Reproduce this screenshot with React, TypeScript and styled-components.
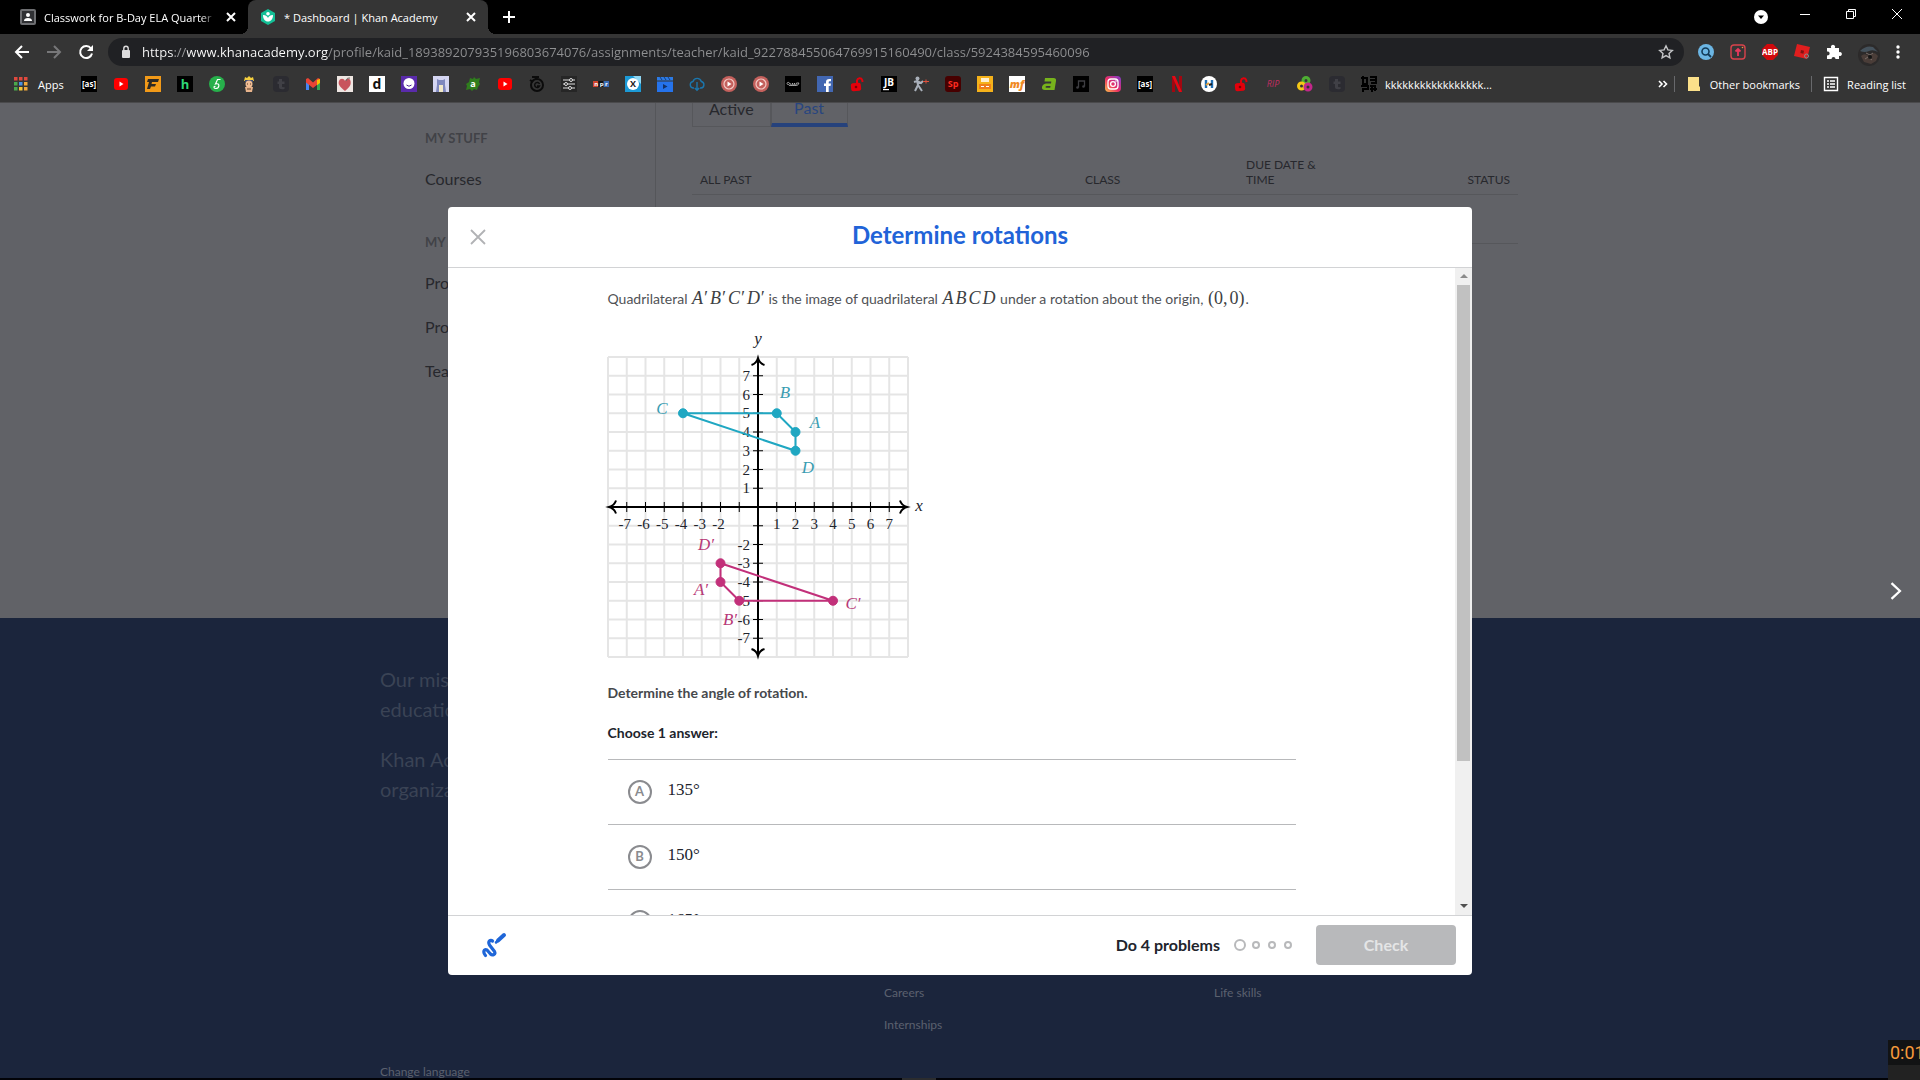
import React from "react";
import styled, { createGlobalStyle } from "styled-components";

const GlobalStyle = createGlobalStyle`
  *, *::before, *::after { box-sizing: border-box; }
  html, body, #root { height: 100%; }
  body { margin: 0; background: #000; font-family: Lato, "Noto Sans", sans-serif; overflow: hidden; }
  button, input { font: inherit; margin: 0; }
  button { border: 0; padding: 0; background: none; color: inherit; cursor: pointer; }
  a { color: inherit; text-decoration: none; }
  h1, h2, p, ul { margin: 0; padding: 0; }
  ul { list-style: none; }
  svg { display: block; }
`;

const uiFont = `"Open Sans", "Noto Sans", sans-serif`;
const mathFont = `"Liberation Serif", "Times New Roman", serif`;

/* ---------- window ---------- */

const Window = styled.div`
  display: grid;
  grid-template-rows: auto minmax(0, 1fr) 2px;
  height: 100vh;
`;

const Chrome = styled.header`
  background: #353535;
  color: #fff;
  font-family: ${uiFont};
  font-size: 11px;
  border-bottom: 1px solid #4a4a4c;
`;

const TabStrip = styled.div`
  display: flex;
  height: 34px;
  background: #000;
  padding-left: 8px;
`;

const BrowserTab = styled.div<{ $active?: boolean }>`
  position: relative;
  display: flex;
  align-items: center;
  gap: 8px;
  width: 240px;
  padding: 0 9px 0 12px;
  border-radius: 8px 8px 0 0;
  background: ${(p) => (p.$active ? "#353535" : "transparent")};
  &::before, &::after {
    content: ${(p) => (p.$active ? '""' : "none")};
    position: absolute;
    bottom: 0;
    width: 8px;
    height: 8px;
  }
  &::before { left: -8px; background: radial-gradient(circle at 0 0, transparent 8px, #353535 8px); }
  &::after { right: -8px; background: radial-gradient(circle at 100% 0, transparent 8px, #353535 8px); }
`;

const TabTitle = styled.span<{ $fade?: boolean }>`
  flex: 1;
  min-width: 0;
  overflow: hidden;
  white-space: nowrap;
  ${(p) => p.$fade && "mask-image: linear-gradient(to right, #000 92%, transparent);"}
`;

const IconButton = styled.button<{ $size?: number }>`
  display: grid;
  place-items: center;
  flex: none;
  width: ${(p) => p.$size ?? 16}px;
  height: ${(p) => p.$size ?? 16}px;
`;

const NewTab = styled(IconButton)`
  margin: 9px 0 0 13px;
`;

const TabSearch = styled(IconButton)`
  margin: 9px 28px 0 auto;
`;

const WindowButtons = styled.div`
  display: flex;
  align-items: center;
  gap: 30px;
  padding: 0 15px 6px 0;
`;

const Toolbar = styled.div`
  display: flex;
  align-items: center;
  height: 36px;
  padding: 0 14px;
`;

const NavButtons = styled.div`
  display: flex;
  gap: 16px;
  margin-right: 14px;
`;

const Omnibox = styled.label`
  display: flex;
  align-items: center;
  flex: 1;
  gap: 8px;
  height: 28px;
  padding: 0 10px;
  border-radius: 14px;
  background: #202124;
`;

const UrlInput = styled.input`
  flex: 1;
  min-width: 0;
  border: 0;
  padding: 0;
  outline: 0;
  height: 24px;
  font-size: 13px;
  color: transparent;
  background: linear-gradient(to right, #fff 31px, #9a9b9d 31px 45px, #fff 45px 186px, #8f9092 186px);
  background-clip: text;
  -webkit-background-clip: text;
`;

const Extensions = styled.div`
  display: flex;
  align-items: center;
  gap: 16px;
  margin-left: 14px;
`;

const BookmarkBar = styled.nav`
  display: flex;
  align-items: center;
  gap: 16px;
  height: 32px;
  padding: 0 14px 4px 13px;
`;

const Bookmark = styled.a`
  display: flex;
  align-items: center;
  gap: 8px;
  white-space: nowrap;
`;

const AppsLink = styled(Bookmark)`
  width: 52px;
  gap: 9px;
`;

const BarEnd = styled.div`
  display: flex;
  align-items: center;
  gap: 11px;
  margin-left: auto;
`;

const MoreButton = styled(IconButton)`
  width: 8px;
`;

const Divider = styled.span`
  width: 1px;
  height: 16px;
  background: #68696c;
`;

/* ---------- page behind the dialog ---------- */

const Viewport = styled.div`
  position: relative;
  overflow: hidden;
  background: #1b253c;
`;

const Dashboard = styled.main`
  background: #616267;
  color: #27282d;
`;

const Container = styled.div`
  display: flex;
  max-width: 1200px;
  margin: 0 auto;
`;

const ScrolledPage = styled(Container)`
  margin-top: -12px;
`;

const Sidebar = styled.nav`
  display: flex;
  flex-direction: column;
  gap: 20px;
  width: 296px;
  padding: 26px 0 225px 65px;
  border-right: 1px solid #55565a;
`;

const SideHeading = styled.h2`
  padding-top: 2px;
  font-size: 13px;
  line-height: 38px;
  font-weight: 700;
  color: #414247;
`;

const SideLink = styled.a`
  display: block;
  font-size: 16px;
  line-height: 44px;
`;

const Assignments = styled.section`
  flex: 1;
  padding: 0 42px 0 36px;
`;

const PageTabs = styled.div`
  display: flex;
`;

const PageTab = styled.button<{ $active?: boolean }>`
  height: 36px;
  min-width: 77px;
  padding: 0 16px;
  font-size: 16px;
  color: ${(p) => (p.$active ? "#29467f" : "#27282d")};
  border: 1px solid #56575b;
  border-top: 0;
  border-bottom: ${(p) => (p.$active ? "4px solid #26427c" : "1px solid #56575b")};
`;

const Table = styled.table`
  width: 100%;
  margin-top: 24px;
  border-collapse: collapse;
  table-layout: fixed;
  font-size: 12px;
  line-height: 15px;
  th {
    padding: 6px 8px 7px;
    font-weight: 400;
    text-align: left;
    vertical-align: bottom;
  }
  th:last-child { text-align: right; }
  tr { border-bottom: 1px solid #56575b; }
  td { height: 49px; }
`;

const NextArrow = styled.button`
  position: absolute;
  top: 479px;
  right: 15px;
`;

const Footer = styled.footer`
  color: #5b616f;
  font-size: 12px;
`;

const FooterColumns = styled(Container)`
  padding: 39px 20px 0;
`;

const Mission = styled.div`
  flex: none;
  width: 504px;
  padding-top: 7px;
  font-size: 20px;
  line-height: 30px;
  color: #3a4355;
  p + p { margin-top: 20px; }
`;

const LinkColumn = styled.ul`
  flex: none;
  width: 330px;
  line-height: 32px;
`;

const Language = styled.div`
  max-width: 1160px;
  margin: 15px auto 0;
  line-height: 32px;
`;

/* ---------- exercise dialog ---------- */

const Overlay = styled.div`
  position: absolute;
  inset: 0;
  display: grid;
  place-items: center;
`;

const Dialog = styled.section`
  display: grid;
  grid-template-rows: 60px minmax(0, 1fr) 59px;
  width: min(1024px, 100%);
  height: min(768px, 100%);
  overflow: hidden;
  border-radius: 4px;
  background: #fff;
  color: #21242c;
`;

const DialogHeader = styled.header`
  display: grid;
  grid-template-columns: 28px 1fr 28px;
  align-items: center;
  padding: 0 16px;
`;

const Title = styled.h1`
  padding-bottom: 4px;
  font-size: 24px;
  line-height: 28px;
  font-weight: 700;
  text-align: center;
  color: #2163d8;
`;

const DialogBody = styled.div`
  display: grid;
  grid-template-columns: 1fr 17px;
  overflow: hidden;
  border: solid #d2d3d5;
  border-width: 1px 0;
`;

const Exercise = styled.div`
  min-height: 0;
  width: 100%;
  max-width: 688px;
  margin: 0 auto;
  padding-top: 20px;
  font-size: 14px;
  line-height: 22px;
`;

const Question = styled.p`
  color: #505256;
  white-space: nowrap;
`;

const Formula = styled.span<{ $upright?: boolean; $primed?: boolean }>`
  display: inline-flex;
  gap: ${(p) => (p.$primed ? 3 : 2)}px;
  padding: 0 1px;
  font-family: ${mathFont};
  font-size: 18px;
  line-height: 20px;
  font-style: ${(p) => (p.$upright ? "normal" : "italic")};
  color: #3d3f43;
`;

const Graph = styled.svg`
  margin-top: 25px;
  overflow: visible;
  font-family: ${mathFont};
`;

const Prompt = styled.p`
  margin-top: 21px;
  font-weight: 700;
  color: #46484c;
`;

const Choices = styled.fieldset`
  margin: 0;
  padding: 0;
  border: 0;
  min-width: 0;
`;

const Legend = styled.legend`
  padding: 18px 0 15px;
  font-weight: 700;
`;

const Choice = styled.label`
  display: flex;
  align-items: center;
  gap: 16px;
  height: 65px;
  padding-left: 20px;
  border-top: 1px solid #b8b9bb;
`;

const Bubble = styled.span`
  display: grid;
  place-items: center;
  width: 24px;
  height: 24px;
  font-size: 13px;
  font-weight: 700;
  line-height: 20px;
  color: #8a8b8f;
  > * { grid-area: 1 / 1; }
  input {
    appearance: none;
    width: 24px;
    height: 24px;
    border: 2px solid #8a8b8f;
    border-radius: 50%;
  }
  span { padding-bottom: 2px; }
`;

const Answer = styled.span`
  font-family: ${mathFont};
  font-size: 17px;
  line-height: 20px;
  padding-bottom: 4px;
`;

const Scrollbar = styled.div`
  display: grid;
  grid-template-rows: 17px 476fr 137fr 17px;
  place-items: center;
  background: #f0f0f0;
`;

const Thumb = styled.span`
  grid-row: 2;
  width: 13px;
  height: 100%;
  background: #c1c1c1;
`;

const ArrowDown = styled.svg`
  grid-row: 4;
`;

const DialogFooter = styled.footer`
  display: flex;
  align-items: center;
  padding: 0 16px 0 33px;
`;

const Progress = styled.div`
  display: flex;
  align-items: center;
  gap: 12px;
  margin-left: auto;
  margin-right: 20px;
  font-size: 16px;
  font-weight: 700;
`;

const ProgressLabel = styled.span`
  padding-bottom: 2px;
`;

const Dots = styled.span`
  display: grid;
  grid-auto-flow: column;
  grid-auto-columns: 16px;
  place-items: center;
`;

const Dot = styled.span<{ $current?: boolean }>`
  width: ${(p) => (p.$current ? 12 : 8)}px;
  height: ${(p) => (p.$current ? 12 : 8)}px;
  border: 2px solid #b8b9bb;
  border-radius: 50%;
`;

const CheckButton = styled.button`
  width: 140px;
  height: 40px;
  padding-bottom: 2px;
  border-radius: 4px;
  background: #b8b9bb;
  color: #e4e5e6;
  font-size: 16px;
  font-weight: 700;
`;

/* ---------- recorder and taskbar edge ---------- */

const Recorder = styled.div`
  position: fixed;
  right: 0;
  bottom: 0;
  width: 32px;
  height: 40px;
  overflow: hidden;
  background: #222;
  font-family: Roboto, sans-serif;
  font-size: 18px;
  line-height: 25px;
  color: #f79a3c;
  white-space: nowrap;
`;

const RecorderTime = styled.div`
  padding-left: 2px;
  background: #121314;
`;

const Taskbar = styled.div`
  display: flex;
  justify-content: center;
  background: #020308;
  padding-right: 82px;
`;

const TaskHandle = styled.span`
  width: 34px;
  background: #2b2c2e;
`;

/* ---------- icons ---------- */

const Stroke = ({ d, size = 16, color = "#fff", width = 2 }: { d: string; size?: number; color?: string; width?: number }) => (
  <svg width={size} height={size} viewBox="0 0 16 16" fill="none" stroke={color} strokeWidth={width} aria-hidden="true">
    <path d={d} />
  </svg>
);

const Tile = ({ bg, r = 0, children }: { bg?: string; r?: number; children?: React.ReactNode }) => (
  <svg width="16" height="16" viewBox="0 0 16 16" aria-hidden="true">
    {bg && <rect width="16" height="16" rx={r} fill={bg} />}
    {children}
  </svg>
);

const Letter = ({ children, fill = "#fff", size = 11, y = 12, italic = false, weight = 700 }: any) => (
  <text x="8" y={y} textAnchor="middle" fontSize={size} fontWeight={weight} fill={fill} fontFamily="Open Sans" fontStyle={italic ? "italic" : "normal"}>
    {children}
  </text>
);

const YouTube = () => (
  <Tile>
    <rect x="1" y="2" width="14" height="12" rx="3" fill="#f00" />
    <path d="M6.5 5.5v5l4-2.5z" fill="#fff" />
  </Tile>
);

const Tumblr = () => (
  <Tile bg="#2b2b31" r={4}>
    <path d="M6 3h3v2.500h2.500V8H9v2.500q0 1 2.500.5V13q-5.500 1-5.500-2V8H4.500V5.500H6z" fill="#404046" />
  </Tile>
);

const PlayDisc = () => (
  <Tile>
    <circle cx="8" cy="8" r="8" fill="#c4605c" />
    <circle cx="8" cy="8" r="5" fill="none" stroke="#f3c9c4" strokeWidth="1.2" />
    <path d="M6.5 5.500v5l4-2.500z" fill="#fff" />
  </Tile>
);

const RedLock = () => (
  <Tile>
    <rect x="2" y="7" width="10" height="8" rx="2" fill="#e3000b" transform="rotate(-6 7 11)" />
    <path d="M8 7V4.500a2.700 2.700 0 0 1 5.200-.5l.4 2" fill="none" stroke="#e3000b" strokeWidth="2" />
    <circle cx="7" cy="11" r="1.3" fill="#7d0006" />
  </Tile>
);

const AsTile = () => (
  <Tile bg="#000">
    <Letter size={8} y={10.5}>[as]</Letter>
  </Tile>
);

const appColors = ["#e0493e", "#e0493e", "#e0493e", "#4aa84c", "#4a90e2", "#f2a83b", "#4aa84c", "#f2c53b", "#f2a83b"];

const AppsGrid = () => (
  <Tile>
    {appColors.map((c, i) => (
      <rect key={i} x={1 + (i % 3) * 5} y={1 + Math.floor(i / 3) * 5} width="3.5" height="3.5" fill={c} />
    ))}
  </Tile>
);

const bookmarks: { name: string; icon: React.ReactNode }[] = [
  { name: "Adult Swim", icon: <AsTile /> },
  { name: "YouTube", icon: <YouTube /> },
  { name: "Flip", icon: <Tile bg="#f29a18"><path d="M3 3h11l-1 3H7L6.500 8H11l-1 2.500H6L5 13H2l2-7H2z" fill="#2e2a24" /></Tile> },
  { name: "Hulu", icon: <Tile bg="#000"><Letter fill="#2fd877" size={13} y={12.5}>h</Letter></Tile> },
  { name: "Five", icon: <Tile><circle cx="8" cy="8" r="8" fill="#27b04b" /><path d="M11.500 3.500H8.500L6.500 8c5-1.500 4 4.500 0 4.500-2 0-2-2.500 0-2" fill="none" stroke="#fff" strokeWidth="1.2" /></Tile> },
  { name: "Naruto", icon: <Tile><path d="M3 5l1-4 2 1 2-2 2 2 2-1 1 4z" fill="#f4cf3e" /><rect x="4" y="4" width="8" height="2" fill="#3f4d72" /><circle cx="8" cy="8" r="3.5" fill="#f0bd94" /><path d="M4 11h8l-1 5H5z" fill="#e8b48c" /><path d="M6 8h1M9 8h1M6 13h4" stroke="#5b3b22" /></Tile> },
  { name: "Tumblr", icon: <Tumblr /> },
  { name: "Gmail", icon: <Tile><path d="M1 3.500V14h3V7z" fill="#4285f4" /><path d="M15 3.500V14h-3V7z" fill="#34a853" /><path d="M1 3l2-1 5 4.500L13 2l2 1v3.500L8 12 1 6.500z" fill="#ea4335" /><path d="M12 4l3-1v4l-3 2.200z" fill="#fbbc04" /></Tile> },
  { name: "Heart", icon: <Tile bg="#eee6e2"><path d="M8 15C2 10 1 8 2 5s5-3 6 0c1-3 5-3 5.500 0S14 10 8 15z" fill="#c8545c" /><path d="M9 5q1-4 4-3" stroke="#6f6a66" fill="none" /></Tile> },
  { name: "Dictionary", icon: <Tile bg="#fff"><Letter fill="#111" size={14} y={13}>d</Letter></Tile> },
  { name: "Ghost", icon: <Tile bg="#5a2bab"><circle cx="8" cy="7.5" r="5.5" fill="#fff" /><path d="M5.500 9q2.500 2.500 5 0" stroke="#4a2490" fill="none" /></Tile> },
  { name: "Bear", icon: <Tile bg="#d5d6f2"><path d="M4 3l2 1h4l2-1v6l1 7H3l1-7z" fill="#7f88bd" /><rect x="6" y="9" width="4" height="7" fill="#f1e8c8" /></Tile> },
  { name: "Turtle", icon: <Tile><path d="M9 1l2 2 4-1-1 4 1 2-2 3-1 3-3-1-2 2-2-2-4 1 1-4-1-2 3-2 1-4 3 1z" fill="#2f7d1d" /><Letter size={9} y={11}>a</Letter></Tile> },
  { name: "YouTube channel", icon: <YouTube /> },
  { name: "Stopwatch", icon: <Tile><circle cx="8" cy="9" r="6" fill="none" stroke="#0b0b0b" strokeWidth="2" /><path d="M3 1h7M7 1v3M1 4l3 2" stroke="#0b0b0b" strokeWidth="2" /><path d="M10.500 8a2.500 2.500 0 1 0 0 2H8" fill="none" stroke="#0b0b0b" strokeWidth="1.5" /></Tile> },
  { name: "Mixer", icon: <Tile bg="#262626"><path d="M2 4h12M2 8h12M2 12h12" stroke="#ddd" strokeWidth="1.2" /><g fill="#262626" stroke="#ddd"><circle cx="10" cy="4" r="1.5" /><circle cx="5" cy="8" r="1.5" /><circle cx="9" cy="12" r="1.5" /></g></Tile> },
  { name: "NPR", icon: <Tile><rect y="5" width="5.3" height="6" fill="#d1442c" /><rect x="5.3" y="5" width="5.300" height="6" fill="#111" /><rect x="10.6" y="5" width="5.4" height="6" fill="#3a6cb4" /><Letter size={6} y={9.8}>n p r</Letter></Tile> },
  { name: "Xbox", icon: <Tile bg="#1c9ad6"><path d="M16 0v8L8 0z" fill="#8fd8f5" /><circle cx="8" cy="8" r="6" fill="#fff" /><Letter fill="#222" size={9} y={11}>X</Letter></Tile> },
  { name: "Movies", icon: <Tile><rect y="1" width="16" height="3.500" fill="#2c7be5" /><rect y="5.5" width="16" height="10.5" fill="#2573ec" /><path d="M3 1l2 3M7 1l2 3M11 1l2 3" stroke="#173d7c" /><path d="M6 8v5l4.500-2.500z" fill="#12326a" /></Tile> },
  { name: "Cloud", icon: <Tile><path d="M5 12H4a3.300 3.300 0 0 1 0-6.500 4.300 4.300 0 0 1 8.300 0A3.300 3.300 0 0 1 12 12h-1M8 6v8M5.800 12L8 14.300 10.200 12" fill="none" stroke="#1b76ad" strokeWidth="1.4" /></Tile> },
  { name: "Player", icon: <PlayDisc /> },
  { name: "Player 2", icon: <PlayDisc /> },
  { name: "Script", icon: <Tile bg="#000"><path d="M2 7.500c0-1.500 2.500-1.500 2.500 0s-2.500 1.500-2.500 0M5 7c1 3 2 3 2.500 0 .5 3 1.500 3 2 0 .5 3 1.500 3 2 0h2.500q-1 3-3 2.500H4" stroke="#b9b9b9" strokeWidth=".8" fill="none" /></Tile> },
  { name: "Facebook", icon: <Tile bg="#4267b2"><path d="M9 16V10H7V7.500h2V6c0-2.500 1.500-3.500 5-3v2.300c-2-.2-2.300.2-2.300 1.200v1H14L13.500 10h-1.800v6z" fill="#fff" /></Tile> },
  { name: "Lock", icon: <RedLock /> },
  { name: "JetBrains", icon: <Tile bg="#000"><Letter size={10} y={9.5}>JB</Letter><rect x="2" y="13" width="6" height="1.2" fill="#fff" /></Tile> },
  { name: "Robot", icon: <Tile><circle cx="4.5" cy="2.5" r="2" fill="#a9b0ba" /><path d="M4 4l1 5M1 6l3-1 4 2 2-2M5 9l4 6M5 9l-3 6" stroke="#a9b0ba" strokeWidth="2" fill="none" /><path d="M10 5.500h6M13 3.500v4" stroke="#e0503c" /></Tile> },
  { name: "Spark", icon: <Tile bg="#470000" r={3}><Letter fill="#ff2b20" size={9} y={11}>Sp</Letter></Tile> },
  { name: "Tickets", icon: <Tile bg="#f5b21a"><rect x="4" y="2" width="8" height="4" fill="#fff0cf" /><rect x="2" y="8" width="12" height="5" fill="#ef7e1a" /><path d="M4 10.500h3M9 10.500h3" stroke="#fff" /></Tile> },
  { name: "MF", icon: <Tile bg="#fff"><Letter fill="#f08a24" size={11} italic weight={800}>mf</Letter></Tile> },
  { name: "Green A", icon: <Tile><path d="M4 2h8.500q3 0 2.500 3l-1.500 9H4q-3.500 0-3-3t4-3.500h5l.3-2H3.500zM6 10q-1.500 0-1.500 1t1.200.8h3.500l.3-1.800z" fill="#77b31c" fillRule="evenodd" /></Tile> },
  { name: "Music", icon: <Tile bg="#000"><path d="M5.500 11.500V5h6v5.500" fill="none" stroke="#3e3e42" strokeWidth="1.3" /><circle cx="4.5" cy="11.5" r="1.3" fill="#3e3e42" /><circle cx="10.5" cy="10.5" r="1.3" fill="#3e3e42" /></Tile> },
  { name: "Instagram", icon: <Tile><defs><linearGradient id="ig" x1="0" y1="1" x2="1" y2="0"><stop offset="0" stopColor="#fdc14b" /><stop offset=".45" stopColor="#ec2f62" /><stop offset="1" stopColor="#7b3bd0" /></linearGradient></defs><rect width="16" height="16" rx="4" fill="url(#ig)" /><rect x="3" y="3" width="10" height="10" rx="3" fill="none" stroke="#fff" strokeWidth="1.3" /><circle cx="8" cy="8" r="2.4" fill="none" stroke="#fff" strokeWidth="1.3" /><circle cx="11" cy="5" r=".8" fill="#fff" /></Tile> },
  { name: "Adult Swim 2", icon: <AsTile /> },
  { name: "Netflix", icon: <Tile><path d="M3 0h3v16H3zM10 0h3v16h-3z" fill="#a30710" /><path d="M3 0h3l7 16h-3z" fill="#e50914" /></Tile> },
  { name: "H", icon: <Tile><circle cx="8" cy="8" r="8" fill="#fff" /><path d="M5 4v8M11 4v8" stroke="#1f6fb5" strokeWidth="2.4" /><path d="M5 9l3-2" stroke="#e8a33a" strokeWidth="2" /><path d="M8 9l3-1" stroke="#1d1d1f" strokeWidth="2" /></Tile> },
  { name: "Lock 2", icon: <RedLock /> },
  { name: "RIP", icon: <Tile><Letter fill="#c02d62" size={9} y={11} italic weight={400}>RIP</Letter></Tile> },
  { name: "Rings", icon: <Tile><g fill="none" strokeWidth="3"><circle cx="9" cy="4.5" r="3" stroke="#4eae33" /><circle cx="4.5" cy="10" r="3" stroke="#f5c817" /><circle cx="11" cy="11" r="3" stroke="#c2288a" /></g></Tile> },
  { name: "Tumblr 2", icon: <Tumblr /> },
];

const Pattern = () => (
  <Tile>
    <path d="M0 2h7M2 0v7M6 3v5H1M9 1h6v6M9 4h5M10 7h6M0 10h7v3H2v3M9 10h5v5M11 9v7M9 13h7" fill="none" stroke="#000" strokeWidth="2" />
  </Tile>
);

/* ---------- graph ---------- */

const UNIT = 18.75;
const px = (x: number) => 150 + x * UNIT;
const py = (y: number) => 172 - y * UNIT;
const range = (a: number, b: number) => Array.from({ length: b - a + 1 }, (_, i) => a + i);

const Shape = ({ points, color }: { points: number[][]; color: string }) => (
  <g fill={color} stroke={color}>
    <polygon points={points.map(([x, y]) => `${px(x)},${py(y)}`).join(" ")} fill="none" strokeWidth="2" />
    {points.map(([x, y]) => (
      <circle key={`${x},${y}`} cx={px(x)} cy={py(y)} r="4.5" strokeWidth="1" />
    ))}
  </g>
);

const Label = ({ x, y, color = "#21242c", children }: any) => (
  <text x={x} y={y} fill={color} fontSize="17" fontStyle="italic" textAnchor="middle">
    {children}
  </text>
);

const CoordinateGraph = () => (
  <Graph width="320" height="326" viewBox="0 0 320 326" role="img" aria-label="Quadrilateral ABCD and its image on a coordinate plane">
    <g stroke="#e5e5e5" strokeWidth="2">
      {range(-8, 8).map((n) => (
        <React.Fragment key={n}>
          <path d={`M${px(n)} ${py(8)}V${py(-8)}`} />
          <path d={`M${px(-8)} ${py(n)}H${px(8)}`} />
        </React.Fragment>
      ))}
    </g>
    <g stroke="#000" strokeWidth="2" fill="none">
      <path d="M2 172H298M150 24V320" />
      <path d="M8 165.500q-1.500 5-7 6.500q5.500 1.500 7 6.500M292 165.500q1.500 5 7 6.500q-5.500 1.500-7 6.500M143.500 30q5-1.500 6.500-7q1.500 5.500 6.500 7M143.500 314q5 1.500 6.500 7q1.500-5.500 6.500-7" />
      <g strokeWidth="1">
        {range(-7, 7).filter((n) => n !== 0).map((n) => (
          <path key={n} d={`M${px(n)} 167V177M145 ${py(n)}H155`} />
        ))}
      </g>
    </g>
    <g fill="#21242c" fontSize="15">
      {range(-7, 7).filter((n) => n !== 0 && n !== -1).map((n) => (
        <React.Fragment key={n}>
          <text x={n < 0 ? px(n) - 2 : px(n)} y="194" textAnchor="middle">{n}</text>
          <text x="142" y={py(n) + 5} textAnchor="end">{n}</text>
        </React.Fragment>
      ))}
    </g>
    <Shape color="#1fa7c2" points={[[2, 4], [1, 5], [-4, 5], [2, 3]]} />
    <Shape color="#c2307a" points={[[-2, -4], [-1, -5], [4, -5], [-2, -3]]} />
    <Label x={150} y={9}>y</Label>
    <Label x={311} y={176}>x</Label>
    <Label x={207} y={93} color="#3a9db2">A</Label>
    <Label x={177} y={63} color="#3a9db2">B</Label>
    <Label x={54} y={79} color="#3a9db2">C</Label>
    <Label x={200} y={138} color="#3a9db2">D</Label>
    <Label x={93} y={260} color="#b83a78">A′</Label>
    <Label x={122} y={290} color="#b83a78">B′</Label>
    <Label x={245} y={274} color="#b83a78">C′</Label>
    <Label x={98} y={215} color="#b83a78">D′</Label>
  </Graph>
);

/* ---------- page content ---------- */

const sideGroups = [
  { title: "MY STUFF", links: ["Courses"] },
  { title: "MY ACCOUNT", links: ["Progress", "Profile", "Teachers"] },
];

const aboutLinks = ["About", "News", "Impact", "Our team", "Our interns", "Our content specialists", "Our leadership", "Our supporters", "Our contributors", "Our finances", "Careers", "Internships"];
const courseLinks = ["Courses", "Math: Pre-K - 8th grade", "Math: Get ready courses", "Math: high school & college", "Test prep", "Science", "Computing", "Arts & humanities", "Economics", "Reading & language arts", "Life skills"];

const url = "https://www.khanacademy.org/profile/kaid_189389207935196803674076/assignments/teacher/kaid_922788455064769915160490/class/5924384595460096";

export default function App() {
  return (
    <Window>
      <GlobalStyle />
      <Chrome>
        <TabStrip>
          <BrowserTab>
            <Tile bg="#6d6e71" r={2}>
              <rect x="2" y="2" width="12" height="12" fill="#303134" />
              <circle cx="8" cy="6" r="2" fill="#fff" />
              <path d="M4 12q0-3 4-3t4 3z" fill="#fff" />
            </Tile>
            <TabTitle $fade>Classwork for B-Day ELA Quarter</TabTitle>
            <IconButton aria-label="Close tab"><Stroke d="M4 4l8 8M12 4l-8 8" /></IconButton>
          </BrowserTab>
          <BrowserTab $active>
            <Tile>
              <path d="M8 0l7 4v8l-7 4-7-4V4z" fill="#14bf96" />
              <circle cx="8" cy="4.8" r="1.8" fill="#fff" />
              <path d="M3 6c3 0 4.500 1.500 5 3 .5-1.500 2-3 5-3 0 4-2 6.500-5 6.500S3 10 3 6z" fill="#fff" />
            </Tile>
            <TabTitle>* Dashboard | Khan Academy</TabTitle>
            <IconButton aria-label="Close tab"><Stroke d="M4 4l8 8M12 4l-8 8" /></IconButton>
          </BrowserTab>
          <NewTab aria-label="New tab"><Stroke d="M8 2v12M2 8h12" /></NewTab>
          <TabSearch aria-label="Search tabs">
            <svg width="14" height="14" viewBox="0 0 14 14"><circle cx="7" cy="7" r="7" fill="#fff" /><path d="M4 5.500h6L7 9z" fill="#000" /></svg>
          </TabSearch>
          <WindowButtons>
            <IconButton aria-label="Minimize"><Stroke d="M3 8.500h10" width={1} /></IconButton>
            <IconButton aria-label="Restore"><Stroke d="M3.500 5.500h7v7h-7zM5.500 5V3.500h7v7H11" width={1} /></IconButton>
            <IconButton aria-label="Close"><Stroke d="M3 3l10 10M13 3L3 13" width={1} /></IconButton>
          </WindowButtons>
        </TabStrip>
        <Toolbar>
          <NavButtons>
            <IconButton aria-label="Back"><Stroke d="M15 8H2M8 2L2 8l6 6" /></IconButton>
            <IconButton aria-label="Forward"><Stroke d="M1 8h13M8 2l6 6-6 6" color="#777779" /></IconButton>
            <IconButton aria-label="Reload">
              <svg width="16" height="16" viewBox="0 0 16 16"><path d="M13 4.500A6 6 0 1 0 14 9.500" fill="none" stroke="#fff" strokeWidth="2" /><path d="M15 1v6H9z" fill="#fff" /></svg>
            </IconButton>
          </NavButtons>
          <Omnibox>
            <Tile><rect x="4" y="6" width="8" height="8" rx="1" fill="#dcdcdd" /><path d="M5.800 6.500V4.500a2.200 2.200 0 0 1 4.400 0v2" fill="none" stroke="#dcdcdd" strokeWidth="1.4" /></Tile>
            <UrlInput type="text" aria-label="Address" defaultValue={url} />
            <Tile><path d="M8 1.800l1.900 4.100 4.400.5-3.300 3 .9 4.400L8 11.600l-3.900 2.200.9-4.400-3.300-3 4.400-.5z" fill="none" stroke="#c4c5c7" strokeWidth="1.4" /></Tile>
          </Omnibox>
          <Extensions>
            <IconButton aria-label="Image search"><Tile><circle cx="8" cy="8" r="8" fill="#6cb6e4" /><circle cx="7.5" cy="7.5" r="3.5" fill="none" stroke="#133a57" strokeWidth="1.6" /><path d="M10 10l3 3" stroke="#133a57" strokeWidth="1.8" /></Tile></IconButton>
            <IconButton aria-label="Uploader"><Tile><rect x="1" y="1" width="14" height="14" rx="3" fill="none" stroke="#d8434c" strokeWidth="1.4" /><path d="M8 12V5M5.500 7.500L8 5l2.500 2.500" fill="none" stroke="#e8385c" strokeWidth="1.8" /><circle cx="12.5" cy="3.5" r=".8" fill="#f0913c" /></Tile></IconButton>
            <IconButton aria-label="Adblock Plus"><Tile><path d="M5 0h6l5 5v6l-5 5H5l-5-5V5z" fill="#d0090c" /><Letter size={8} y={11}>ABP</Letter></Tile></IconButton>
            <IconButton aria-label="Roblox extension"><Tile><path d="M3 0l13 3-3 12L0 12z" fill="#e01e1e" /><path d="M7 6l3 .7-.6 3-3-.7z" fill="#7e1212" /><circle cx="12.5" cy="12" r="2" fill="none" stroke="#8c8c8c" /></Tile></IconButton>
            <IconButton aria-label="Extensions"><Tile><path d="M1 4h4.200a2.100 2.100 0 1 1 3.600 0H13v4.200a2 2 0 1 1 0 3.600V15H9.500a2 2 0 1 0-4 0H1v-3.700a2 2 0 1 0 0-3.800z" fill="#fff" /></Tile></IconButton>
            <IconButton aria-label="Profile">
              <svg width="22" height="22" viewBox="0 0 22 22"><circle cx="11" cy="11" r="11" fill="#2c2a2a" /><path d="M2 7Q8 1 15 3l5 5q-5-3-9-1t-9 0z" fill="#45525c" /><path d="M3 12q3-3 6-1t5-1 6 2l-2 5-5 3-7-2z" fill="#4a3d38" /><path d="M8 9l4 2 3-2M7 15l3-2 4 3" stroke="#7b6f69" fill="none" /><circle cx="12" cy="13" r="2" fill="#161616" /></svg>
            </IconButton>
            <IconButton aria-label="Menu"><Tile><g fill="#fff"><circle cx="8" cy="3" r="1.7" /><circle cx="8" cy="8" r="1.7" /><circle cx="8" cy="13" r="1.7" /></g></Tile></IconButton>
          </Extensions>
        </Toolbar>
        <BookmarkBar aria-label="Bookmarks">
          <AppsLink href="#"><AppsGrid />Apps</AppsLink>
          {bookmarks.map((b) => (
            <Bookmark key={b.name} href="#" aria-label={b.name}>{b.icon}</Bookmark>
          ))}
          <Bookmark href="#"><Pattern />kkkkkkkkkkkkkkkkk...</Bookmark>
          <BarEnd>
            <MoreButton aria-label="More bookmarks"><Stroke d="M4 5l3 3-3 3M8.500 5l3 3-3 3" width={1.6} /></MoreButton>
            <Divider />
            <Bookmark href="#"><Tile><path d="M2 1h11v9l1 1v4H2z" fill="#fbe08a" /></Tile>Other bookmarks</Bookmark>
            <Divider />
            <Bookmark href="#"><Tile><path d="M1.500 1.500h13v13h-13zM4 5h2M7 5h5M4 8h2M7 8h5M4 11h2M7 11h5" fill="none" stroke="#fff" strokeWidth="1.4" /></Tile>Reading list</Bookmark>
          </BarEnd>
        </BookmarkBar>
      </Chrome>

      <Viewport>
        <Dashboard>
          <ScrolledPage>
            <Sidebar>
              {sideGroups.map((g) => (
                <div key={g.title}>
                  <SideHeading>{g.title}</SideHeading>
                  {g.links.map((l) => <SideLink key={l} href="#">{l}</SideLink>)}
                </div>
              ))}
            </Sidebar>
            <Assignments>
              <PageTabs>
                <PageTab>Active</PageTab>
                <PageTab $active>Past</PageTab>
              </PageTabs>
              <Table>
                <colgroup><col width="385" /><col width="161" /><col width="100" /><col /></colgroup>
                <thead><tr><th>ALL PAST</th><th>CLASS</th><th>DUE DATE &amp; TIME</th><th>STATUS</th></tr></thead>
                <tbody><tr><td colSpan={4} /></tr></tbody>
              </Table>
            </Assignments>
          </ScrolledPage>
        </Dashboard>
        <Footer>
          <FooterColumns>
            <Mission>
              <p>Our mission is to provide a free, world-class<br />education to anyone, anywhere.</p>
              <p>Khan Academy is a 501(c)(3) nonprofit<br />organization. Donate or volunteer today!</p>
            </Mission>
            <LinkColumn>{aboutLinks.map((l) => <li key={l}><a href="#">{l}</a></li>)}</LinkColumn>
            <LinkColumn>{courseLinks.map((l) => <li key={l}><a href="#">{l}</a></li>)}</LinkColumn>
          </FooterColumns>
          <Language><a href="#">Change language</a></Language>
        </Footer>

        <Overlay>
          <Dialog role="dialog" aria-labelledby="exercise-title">
            <DialogHeader>
              <IconButton $size={28} aria-label="Close exercise"><Stroke d="M1 1l14 14M15 1L1 15" size={16} color="#b1b2b5" width={1.8} /></IconButton>
              <Title id="exercise-title">Determine rotations</Title>
            </DialogHeader>
            <DialogBody>
              <Exercise>
                <Question>
                  Quadrilateral <Formula $primed><span>A′</span><span>B′</span><span>C′</span><span>D′</span></Formula> is the image of quadrilateral{" "}
                  <Formula><span>A</span><span>B</span><span>C</span><span>D</span></Formula> under a rotation about the origin,{" "}
                  <Formula $upright><span>(0,</span><span>0)</span></Formula>.
                </Question>
                <CoordinateGraph />
                <Prompt>Determine the angle of rotation.</Prompt>
                <Choices>
                  <Legend>Choose 1 answer:</Legend>
                  {[["A", "135°"], ["B", "150°"], ["C", "165°"]].map(([letter, value]) => (
                    <Choice key={letter}>
                      <Bubble><input type="radio" name="angle" value={value} /><span>{letter}</span></Bubble>
                      <Answer>{value}</Answer>
                    </Choice>
                  ))}
                </Choices>
              </Exercise>
              <Scrollbar aria-hidden="true">
                <svg width="8" height="4" viewBox="0 0 8 4"><path d="M0 4l4-4 4 4z" fill="#8b8b8b" /></svg>
                <Thumb />
                <ArrowDown width="8" height="4" viewBox="0 0 8 4"><path d="M0 0h8L4 4z" fill="#505050" /></ArrowDown>
              </Scrollbar>
            </DialogBody>
            <DialogFooter>
              <IconButton $size={26} aria-label="Scratchpad">
                <svg width="26" height="26" viewBox="0 0 26 26" fill="none" stroke="#1f66d8" strokeLinecap="round" strokeLinejoin="round">
                  <path d="M4.500 23.500C1.500 20 3 16.500 6 18l3.500 4c2 2 5.500.5 4-2.500L8.500 13C6.500 9.500 9.500 7 11.500 9" strokeWidth="3.2" />
                  <path d="M23 3l-6 5.500" strokeWidth="4" />
                  <path d="M16.500 9l-1.500 1.500" strokeWidth="2.5" />
                </svg>
              </IconButton>
              <Progress>
                <ProgressLabel>Do 4 problems</ProgressLabel>
                <Dots><Dot $current /><Dot /><Dot /><Dot /></Dots>
              </Progress>
              <CheckButton disabled>Check</CheckButton>
            </DialogFooter>
          </Dialog>
        </Overlay>
        <NextArrow aria-label="Next"><Stroke d="M4 1l7.500 7L4 15" size={18} /></NextArrow>
      </Viewport>
      <Taskbar><TaskHandle /></Taskbar>
      <Recorder><RecorderTime>0:01</RecorderTime></Recorder>
    </Window>
  );
}
